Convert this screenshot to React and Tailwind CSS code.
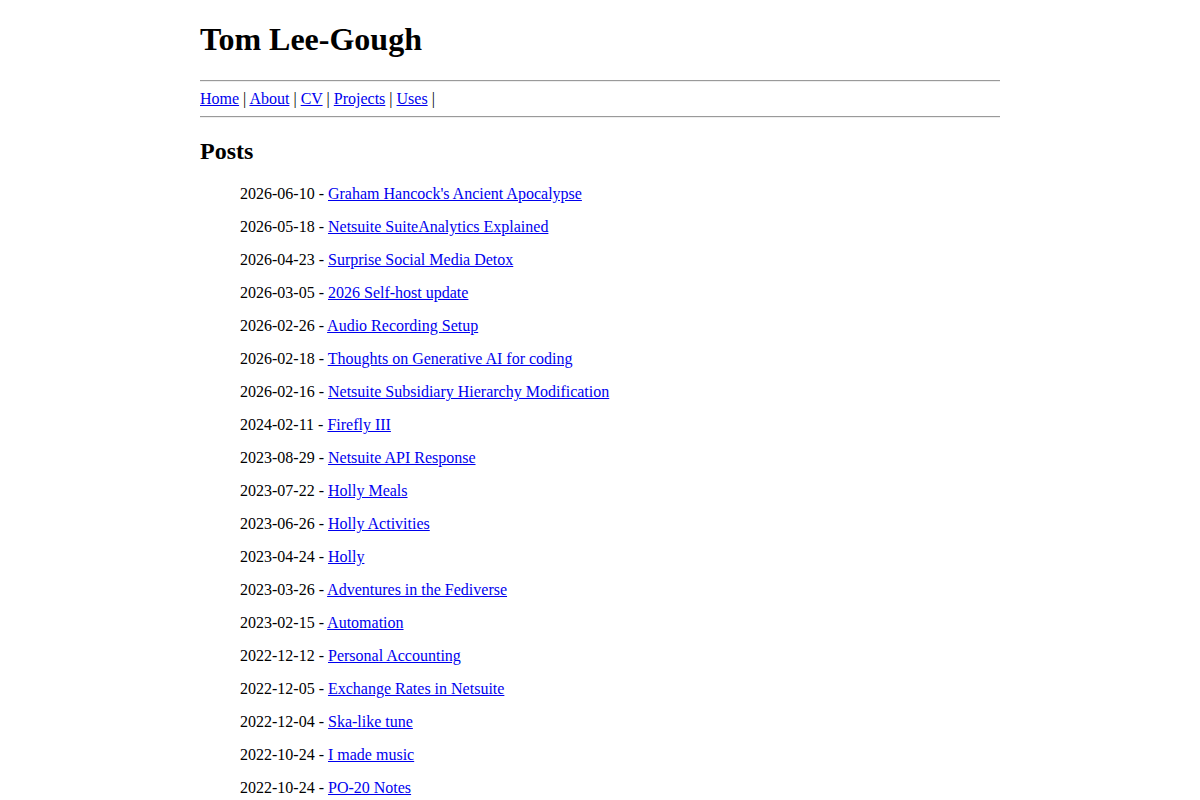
import React from 'react';

const posts = [
  ['2026-06-10', "Graham Hancock's Ancient Apocalypse"],
  ['2026-05-18', 'Netsuite SuiteAnalytics Explained'],
  ['2026-04-23', 'Surprise Social Media Detox'],
  ['2026-03-05', '2026 Self-host update'],
  ['2026-02-26', 'Audio Recording Setup'],
  ['2026-02-18', 'Thoughts on Generative AI for coding'],
  ['2026-02-16', 'Netsuite Subsidiary Hierarchy Modification'],
  ['2024-02-11', 'Firefly III'],
  ['2023-08-29', 'Netsuite API Response'],
  ['2023-07-22', 'Holly Meals'],
  ['2023-06-26', 'Holly Activities'],
  ['2023-04-24', 'Holly'],
  ['2023-03-26', 'Adventures in the Fediverse'],
  ['2023-02-15', 'Automation'],
  ['2022-12-12', 'Personal Accounting'],
  ['2022-12-05', 'Exchange Rates in Netsuite'],
  ['2022-12-04', 'Ska-like tune'],
  ['2022-10-24', 'I made music'],
  ['2022-10-24', 'PO-20 Notes'],
];

const navLinks = ['Home', 'About', 'CV', 'Projects', 'Uses'];

function Rule() {
  return <hr className="h-0 border-t border-b border-t-[#9a9a9a] border-b-[#eeeeee] my-0" />;
}

export default function App() {
  return (
    <div className="bg-white text-black min-h-screen font-['Liberation_Serif',serif] text-[16px]">
      <div className="w-[800px] mx-auto">
        <h1 className="text-[32px] font-bold leading-[37px] pt-[21px] pb-[22px]">Tom Lee-Gough</h1>
        <Rule />
        <nav className="leading-[18px] py-[8px]">
          {navLinks.map((name) => (
            <React.Fragment key={name}>
              <a href="#" className="text-[#0000ee] underline">
                {name}
              </a>{' '}
              |{' '}
            </React.Fragment>
          ))}
        </nav>
        <Rule />
        <h2 className="text-[24px] font-bold leading-[28px] pt-[19px] pb-[12px]">Posts</h2>
        <ul className="pl-[40px] list-none">
          {posts.map(([date, title], i) => (
            <li key={i} className="leading-[33px]">
              {date} -{' '}
              <a href="#" className="text-[#0000ee] underline">
                {title}
              </a>
            </li>
          ))}
        </ul>
      </div>
    </div>
  );
}
